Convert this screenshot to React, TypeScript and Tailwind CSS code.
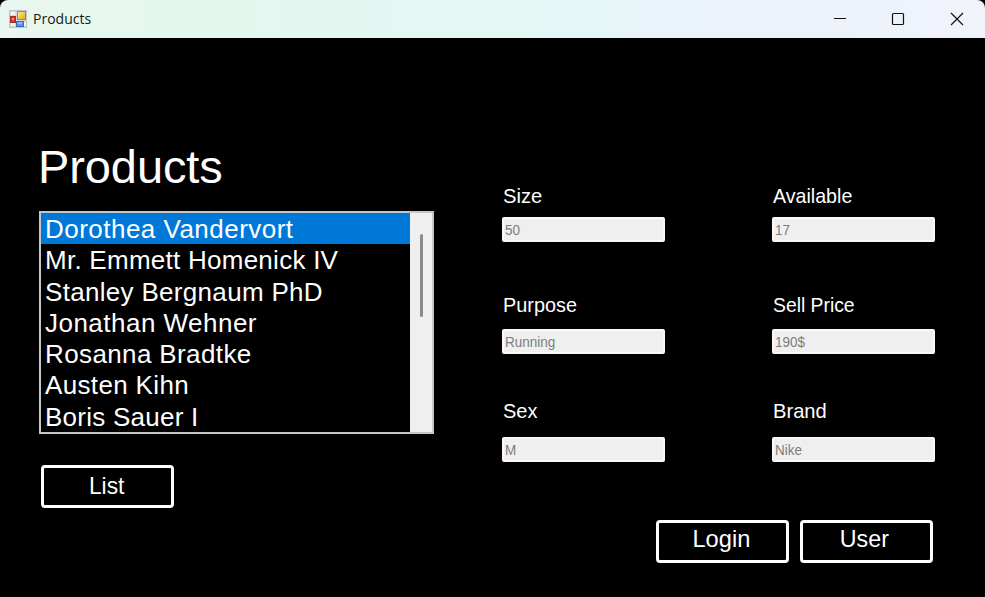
const names = [
  { name: "Dorothea Vandervort", tracking: "tracking-[0.48px]" },
  { name: "Mr. Emmett Homenick IV", tracking: "tracking-[0.26px]" },
  { name: "Stanley Bergnaum PhD", tracking: "tracking-[0.31px]" },
  { name: "Jonathan Wehner", tracking: "tracking-[0.48px]" },
  { name: "Rosanna Bradtke", tracking: "tracking-[0.38px]" },
  { name: "Austen Kihn", tracking: "tracking-[0.35px]" },
  { name: "Boris Sauer I", tracking: "tracking-[0.25px]" },
];

const rows = [
  {
    height: "h-[109px]",
    gap: "mt-[9px]",
    fields: [
      { label: "Size", value: "50", scale: "scale-x-[0.96]" },
      { label: "Available", value: "17", scale: "scale-x-[0.935]" },
    ],
  },
  {
    height: "h-[106px]",
    gap: "mt-[12px]",
    fields: [
      { label: "Purpose", value: "Running", scale: "scale-x-[0.945]" },
      { label: "Sell Price", value: "190$", scale: "scale-x-[0.92]" },
    ],
  },
  {
    height: "h-[63px]",
    gap: "mt-[14px]",
    fields: [
      { label: "Sex", value: "M", scale: "scale-x-[0.95]" },
      { label: "Brand", value: "Nike", scale: "scale-x-[0.96]" },
    ],
  },
];

function AppIcon() {
  return (
    <svg width="18" height="18" viewBox="0 0 18 18" className="shrink-0">
      <defs>
        <linearGradient id="gold" x1="0" y1="0" x2="1" y2="1">
          <stop offset="0" stopColor="#fff0a0" />
          <stop offset="1" stopColor="#e2a411" />
        </linearGradient>
      </defs>
      <rect x="0.5" y="0.5" width="17" height="17" fill="#d3d8d9" stroke="#bfc5c6" />
      <path d="M2 2h4v3H2zM2 13h4v3H2zM15 12h2v4h-2z" fill="#f3f5f5" />
      <rect x="8.5" y="1.5" width="8" height="8" fill="url(#gold)" stroke="#b98714" />
      <rect x="1.5" y="6.5" width="5" height="6" fill="#d23a2d" stroke="#a82a24" />
      <rect x="3" y="8" width="2" height="2" fill="#ee8d78" />
      <rect x="7.5" y="11.5" width="7" height="5" fill="#5f92ee" stroke="#3c6cc8" />
      <rect x="9" y="12" width="4" height="2" fill="#94b9fa" />
    </svg>
  );
}

function TitleBar() {
  return (
    <header className="flex h-[38px] items-center rounded-t-[8px] bg-[linear-gradient(to_right,#e8f7ef_0%,#e4f7ee_18%,#e3f8f6_55%,#ebf2fb_72%,#f0f3fa_100%)] pl-[9px]">
      <AppIcon />
      <span className="ml-[6px] pb-[2px] font-['Open_Sans','Noto_Sans',sans-serif] text-[14px] text-[#161a18]">
        Products
      </span>
      <svg width="175" height="38" viewBox="0 0 175 38" className="ml-auto" fill="none" stroke="#111">
        <path d="M24 18.5h12" />
        <rect x="82.5" y="13.5" width="11" height="11" rx="1" strokeWidth="1.2" />
        <path d="M141 13l12 12M153 13l-12 12" strokeWidth="1.2" />
      </svg>
    </header>
  );
}

function Button({ label, pad, scale }: { label: string; pad: string; scale: string }) {
  return (
    <button
      className={`flex h-[43px] w-[133px] justify-center rounded-[4px] border-[3px] border-white text-[24px] leading-[28px] ${pad}`}
    >
      <span className={`inline-block ${scale}`}>{label}</span>
    </button>
  );
}

function Field({ label, value, gap, scale }: { label: string; value: string; gap: string; scale: string }) {
  return (
    <label className="flex w-[163px] flex-col">
      <span className="ml-[1px] h-[24px] text-[21px] leading-[24px] whitespace-nowrap">
        <span className={`inline-block origin-left ${scale}`}>{label}</span>
      </span>
      <span
        className={`flex h-[25px] items-center rounded-[2px] border-2 border-[#f9f9f9] bg-[#efefef] pb-[1px] pl-[1px] text-[15px] leading-[17px] text-[#7d7d7d] ${gap}`}
      >
        <span className="inline-block origin-left scale-x-[0.9]">{value}</span>
      </span>
    </label>
  );
}

export default function App() {
  return (
    <div className="h-[597px] w-[985px] overflow-hidden bg-black font-['Liberation_Sans',Arial,sans-serif] text-white">
      <TitleBar />
      <main className="flex">
        <section className="w-[502px] pt-[102px] pl-[39px]">
          <h1 className="-ml-px h-[71px] text-[47px] leading-[54px] tracking-[-0.1px]">Products</h1>
          <div className="flex h-[223px] w-[395px] border-2 border-[#c4c6ca]">
            <ul className="flex-1">
              {names.map((item, i) => (
                <li
                  key={item.name}
                  className={`h-[31.25px] pl-[4px] text-[26px] leading-[33px] whitespace-nowrap ${item.tracking} ${i === 0 ? "bg-[#0078d7]" : ""}`}
                >
                  {item.name}
                </li>
              ))}
            </ul>
            <div className="w-[22px] bg-[#efefef] pt-[21px] pl-[10px]">
              <div className="h-[83px] w-[3px] rounded-full bg-[#8b8b8b]" />
            </div>
          </div>
          <div className="mt-[31px] ml-[2px]">
            <Button label="List" pad="pt-[4px] pr-[1px]" scale="scale-x-[0.95]" />
          </div>
        </section>
        <section className="w-[433px] pt-[146px]">
          {rows.map((row) => (
            <div key={row.fields[0].label} className={`flex justify-between ${row.height}`}>
              {row.fields.map((field) => (
                <Field key={field.label} {...field} gap={row.gap} />
              ))}
            </div>
          ))}
          <div className="mt-[58px] flex justify-end gap-[11px] pr-[2px]">
            <Button label="Login" pad="pt-[2px] pr-[3px]" scale="scale-x-[0.985]" />
            <Button label="User" pad="pt-[2px] pr-[5px]" scale="scale-x-[0.97]" />
          </div>
        </section>
      </main>
    </div>
  );
}
